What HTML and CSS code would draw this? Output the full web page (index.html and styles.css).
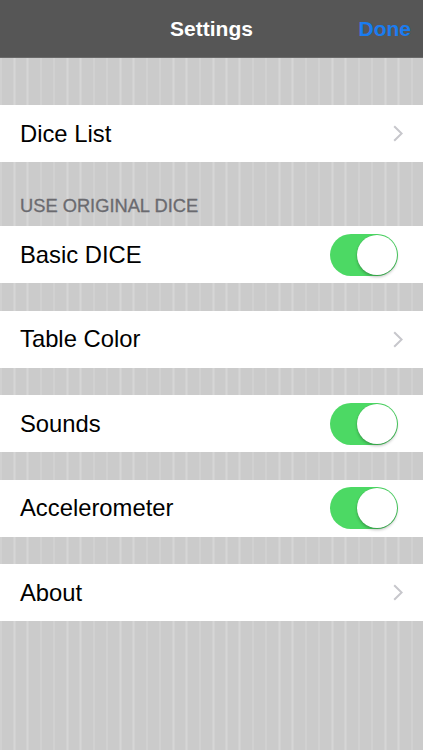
FILE: index.html
```html
<!DOCTYPE html>
<html lang="en">
<head>
  <meta charset="UTF-8">
  <title>Settings</title>
  <link rel="stylesheet" href="styles.css">
</head>
<body>
  <header class="navbar">
    <h1 class="title">Settings</h1>
    <span class="done">Done</span>
  </header>

  <main class="table">
    <div class="group first">
      <div class="cell">
        <span class="label">Dice List</span>
        <svg class="chevron" width="10" height="17" viewBox="0 0 10 17"><polyline points="1.2,1.2 8.6,8.5 1.2,15.8" fill="none" stroke="#c7c7cc" stroke-width="2"/></svg>
      </div>
    </div>

    <div class="group">
      <div class="section-title">USE ORIGINAL DICE</div>
      <div class="cell">
        <span class="label">Basic DICE</span>
        <span class="switch on"><span class="knob"></span></span>
      </div>
    </div>

    <div class="group spaced">
      <div class="cell">
        <span class="label">Table Color</span>
        <svg class="chevron" width="10" height="17" viewBox="0 0 10 17"><polyline points="1.2,1.2 8.6,8.5 1.2,15.8" fill="none" stroke="#c7c7cc" stroke-width="2"/></svg>
      </div>
    </div>

    <div class="group spaced">
      <div class="cell">
        <span class="label">Sounds</span>
        <span class="switch on"><span class="knob"></span></span>
      </div>
    </div>

    <div class="group spaced">
      <div class="cell">
        <span class="label">Accelerometer</span>
        <span class="switch on"><span class="knob"></span></span>
      </div>
    </div>

    <div class="group spaced">
      <div class="cell">
        <span class="label">About</span>
        <svg class="chevron" width="10" height="17" viewBox="0 0 10 17"><polyline points="1.2,1.2 8.6,8.5 1.2,15.8" fill="none" stroke="#c7c7cc" stroke-width="2"/></svg>
      </div>
    </div>
  </main>
</body>
</html>
```

FILE: styles.css
```css
html, body {
  margin: 0;
  padding: 0;
}
body {
  width: 423px;
  min-height: 750px;
  font-family: "Liberation Sans", Arial, sans-serif;
  background-color: #cbcbcb;
  background-image: repeating-linear-gradient(90deg, #d6d6d6 0, #d6d6d6 1.5px, #cbcbcb 1.5px, #cbcbcb 13.25px);
  background-position: 0.5px 0;
}

/* top bar */
.navbar {
  height: 57px;
  background: #565656;
  border-bottom: 1px solid #6a6a6a;
  display: flex;
  align-items: center;
  justify-content: center;
  position: relative;
}
.title {
  margin: 0;
  font-size: 21px;
  font-weight: bold;
  color: #fff;
}
.done {
  position: absolute;
  right: 12px;
  top: 17px;
  font-size: 21px;
  font-weight: bold;
  color: #1a7cf0;
}

/* table */
.table {
  display: flex;
  flex-direction: column;
}
.group.first {
  margin-top: 47px;
}
.group.spaced {
  margin-top: 27.5px;
}
.section-title {
  height: 64px;
  box-sizing: border-box;
  padding: 0 20px 9px;
  display: flex;
  align-items: flex-end;
  font-size: 18.3px;
  color: #6a6a6f;
  -webkit-text-stroke: 0.3px #6a6a6f;
}
.cell {
  height: 57px;
  background: #fff;
  display: flex;
  align-items: center;
  justify-content: space-between;
  padding: 0 20px;
}
.label {
  font-size: 23.8px;
  color: #000;
}
.chevron {
  display: block;
}

/* toggle switch */
.switch {
  width: 68px;
  height: 42px;
  border-radius: 21px;
  background: #4cd964;
  position: relative;
  margin-right: 5px;
}
.knob {
  position: absolute;
  right: 1px;
  top: 1px;
  width: 40px;
  height: 40px;
  border-radius: 50%;
  background: #fff;
  box-shadow: 0 2px 3px rgba(0, 0, 0, 0.25), 0 0 0 0.5px rgba(0, 0, 0, 0.08);
}
```
